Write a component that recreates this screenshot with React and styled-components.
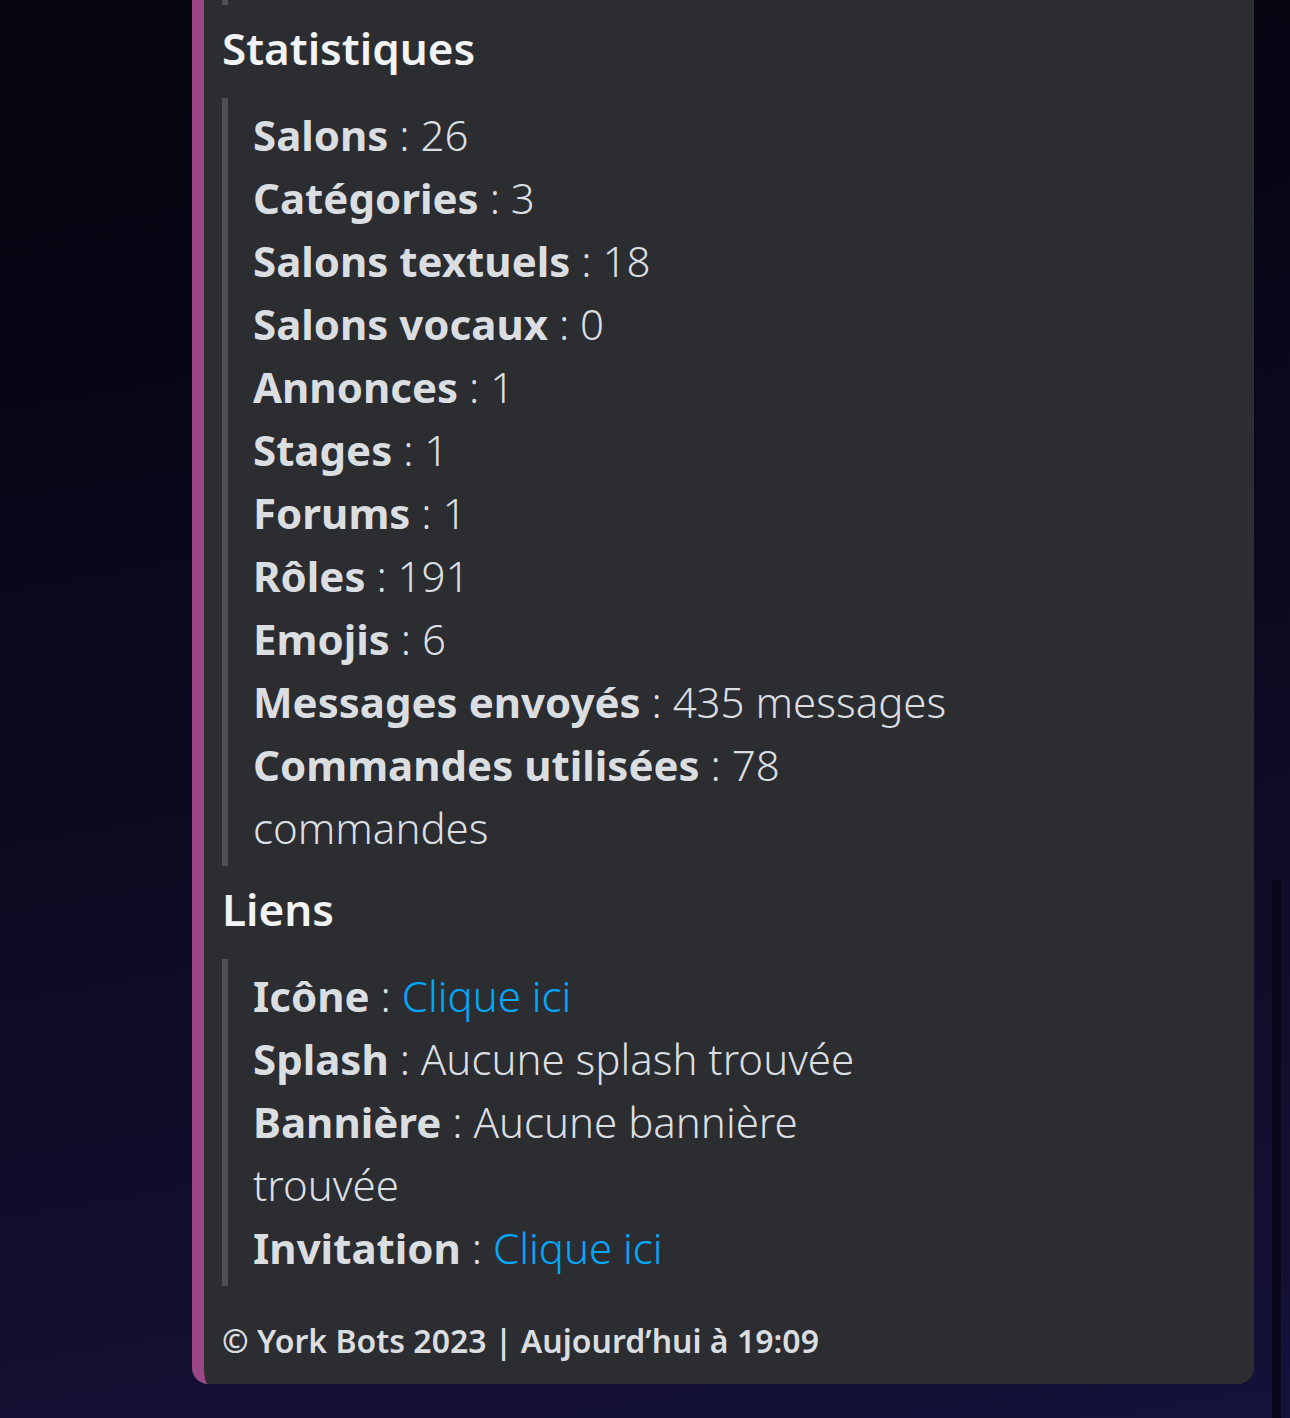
import React from "react";
import styled, { createGlobalStyle } from "styled-components";

const Global = createGlobalStyle`
  html, body { margin: 0; padding: 0; }
  body {
    min-height: 1418px;
    background: linear-gradient(170deg, #06040d 0%, #09071a 35%, #100d29 70%, #15123a 100%);
    font-family: "Noto Sans", Lato, "Liberation Sans", sans-serif;
    overflow: hidden;
  }
`;

const Page = styled.div`
  position: relative;
  min-height: 1418px;
  padding-left: 192px;
  box-sizing: border-box;
`;

const ScrollTrack = styled.div`
  position: absolute;
  left: 1272px;
  top: 880px;
  width: 9px;
  bottom: 0;
  background: #09071a;
`;

const Embed = styled.article`
  width: 1062px;
  box-sizing: border-box;
  background: #2b2d31;
  border-left: 12px solid #9a4687;
  border-radius: 0 0 16px 16px;
  padding: 0 0 22px 18px;
  display: flex;
  flex-direction: column;
`;

const QuoteTail = styled.div`
  width: 6px;
  height: 5px;
  background: #4e5058;
`;

const Field = styled.section`
  display: flex;
  flex-direction: column;
  margin-top: 12px;
`;

const FieldName = styled.h3`
  margin: 0;
  font-size: 44px;
  line-height: 63px;
  font-weight: 600;
  color: #f2f3f5;
`;

const Quote = styled.div`
  margin-top: 18px;
  border-left: 6px solid #4e5058;
  padding: 5px 0 7px 25px;
  width: 696px;
`;

const Line = styled.div`
  font-size: 42px;
  line-height: 63px;
  color: #dbdee1;
  font-weight: 300;
`;

const Label = styled.strong`
  font-weight: 700;
`;

const Link = styled.a`
  color: #00a8fc;
  text-decoration: none;
  font-weight: 300;
`;

const Footer = styled.footer`
  margin-top: 34px;
  font-size: 32px;
  line-height: 42px;
  font-weight: 600;
  color: #dbdee1;
`;

const stats = [
  ["Salons", "26"],
  ["Catégories", "3"],
  ["Salons textuels", "18"],
  ["Salons vocaux", "0"],
  ["Annonces", "1"],
  ["Stages", "1"],
  ["Forums", "1"],
  ["Rôles", "191"],
  ["Emojis", "6"],
  ["Messages envoyés", "435 messages"],
  ["Commandes utilisées", "78 commandes"],
];

export default function App() {
  return (
    <>
      <Global />
      <Page>
        <ScrollTrack />
        <Embed>
          <QuoteTail />
          <Field>
            <FieldName>Statistiques</FieldName>
            <Quote>
              {stats.map(([k, v]) => (
                <Line key={k}>
                  <Label>{k}</Label> : {v}
                </Line>
              ))}
            </Quote>
          </Field>
          <Field>
            <FieldName>Liens</FieldName>
            <Quote>
              <Line>
                <Label>Icône</Label> : <Link href="#">Clique ici</Link>
              </Line>
              <Line>
                <Label>Splash</Label> : Aucune splash trouvée
              </Line>
              <Line>
                <Label>Bannière</Label> : Aucune bannière trouvée
              </Line>
              <Line>
                <Label>Invitation</Label> : <Link href="#">Clique ici</Link>
              </Line>
            </Quote>
          </Field>
          <Footer>© York Bots 2023 | Aujourd’hui à 19:09</Footer>
        </Embed>
      </Page>
    </>
  );
}
